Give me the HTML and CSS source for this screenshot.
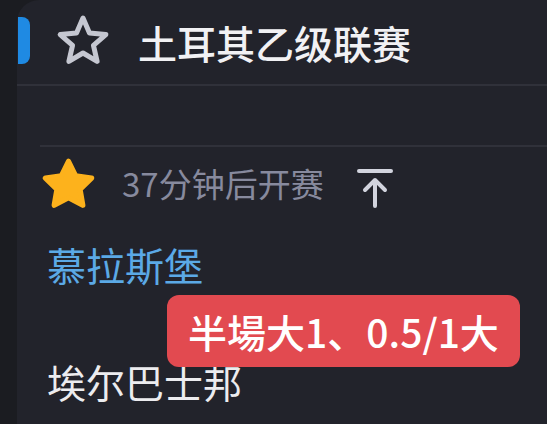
FILE: index.html
```html
<!DOCTYPE html>
<html lang="zh-CN">
  <head>
    <meta charset="UTF-8" />
    <meta name="viewport" content="width=device-width, initial-scale=1.0" />
    <title>土耳其乙级联赛</title>
    <link rel="stylesheet" href="styles.css">
  </head>
  <body>
    <div class="page">
      <div class="side"></div>
      <div class="panel">
        <div class="league-head">
          <span class="pill"></span>
          <svg class="star-outline" viewBox="0 0 60 54" width="60" height="54">
            <path d="M30 4 L36.47 19.1 L52.83 20.58 L40.46 31.4 L44.11 47.42 L30 39 L15.89 47.42 L19.54 31.4 L7.17 20.58 L23.53 19.1 Z"
              fill="none" stroke="#c5c7d1" stroke-width="5" stroke-linejoin="round" />
          </svg>
          <h1 class="league-name">土耳其乙级联赛</h1>
        </div>

        <div class="match">
          <div class="match-row">
            <svg class="star-fav" viewBox="0 0 54 52" width="57" height="55">
              <path d="M27 5 L33.76 18.7 L48.87 20.89 L37.94 31.55 L40.52 46.61 L27 39.5 L13.48 46.61 L16.06 31.55 L5.13 20.89 L20.24 18.7 Z"
                fill="#fdb21c" stroke="#fdb21c" stroke-width="5" stroke-linejoin="round" />
            </svg>
            <span class="kickoff">37分钟后开赛</span>
            <svg class="pin-top" viewBox="0 0 36 42" width="36" height="42">
              <path d="M2 3 H34" stroke="#d2d4de" stroke-width="4" stroke-linecap="round" />
              <path d="M18 38 V12 M8 22 L18 12 L28 22" fill="none" stroke="#d2d4de" stroke-width="4"
                stroke-linecap="round" stroke-linejoin="round" />
            </svg>
          </div>
          <div class="team home">慕拉斯堡</div>
          <div class="team away">埃尔巴士邦</div>
          <div class="tip">半場大1、0.5/1大</div>
        </div>
      </div>
    </div>
  </body>
</html>
```

FILE: styles.css
```css
body {
  margin: 0;
  background: #1b1c21;
  font-family: "Noto Sans CJK SC", "Noto Sans", sans-serif;
  overflow: hidden;
}

.page {
  display: flex;
  height: 424px;
}

.side {
  width: 17px;
  flex-shrink: 0;
}

.panel {
  flex: 1;
  background: #22232b;
  border-top-left-radius: 22px;
}

.league-head {
  display: flex;
  align-items: center;
  height: 84px;
  border-bottom: 2px solid #30313a;
}

.pill {
  width: 12px;
  height: 47px;
  margin-left: 1px;
  margin-top: -4px;
  background: #1f8ae3;
  border-radius: 0 8px 8px 0;
}

.star-outline {
  margin-left: 23px;
  margin-top: -2px;
}

.league-name {
  margin: 0 0 0 25px;
  font-size: 39px;
  font-weight: 500;
  line-height: 1;
  color: #f1f1f4;
}

.match {
  position: relative;
  margin-top: 59px;
  margin-left: 23px;
  border-top: 2px solid #30313a;
}

.match-row {
  display: flex;
  align-items: center;
  padding-top: 10px;
  height: 52px;
}

.kickoff {
  margin-left: 25px;
  font-size: 33px;
  color: #878a9e;
}

.pin-top {
  margin-left: 33px;
  margin-top: 12px;
}

.team {
  margin-left: 7px;
  font-size: 39px;
  line-height: 1.2;
}

.home {
  margin-top: 32px;
  color: #5ba9e6;
}

.away {
  margin-top: 70px;
  color: #ececef;
}

.tip {
  position: absolute;
  left: 127px;
  top: 148px;
  width: 353px;
  height: 72px;
  background: #e24a50;
  border-radius: 12px;
  color: #fff;
  font-size: 39px;
  font-weight: 500;
  text-align: center;
  line-height: 72px;
}
```
